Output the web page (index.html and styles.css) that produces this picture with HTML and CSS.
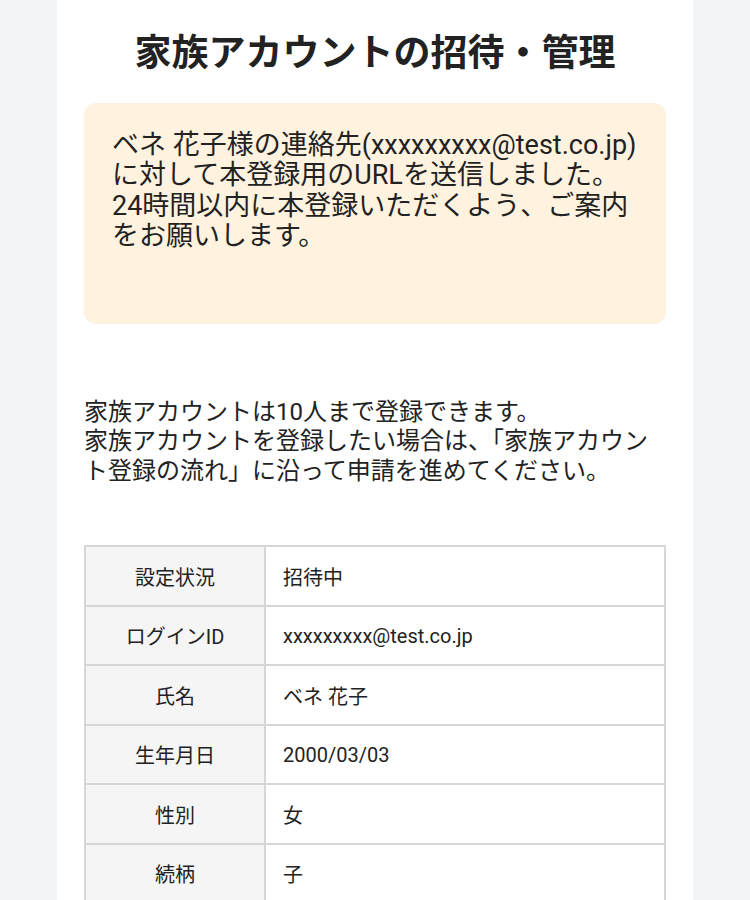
FILE: index.html
```html
<!DOCTYPE html>
<html lang="ja">
<head>
<meta charset="utf-8">
<link rel="stylesheet" href="styles.css">
</head>
<body>
<main class="page">
  <h1 class="title">家族アカウントの招待・管理</h1>
  <div class="notice">
    <p>ベネ 花子様の連絡先(xxxxxxxxx@test.co.jp)に対して本登録用のURLを送信しました。24時間以内に本登録いただくよう、ご案内をお願いします。</p>
  </div>
  <p class="lead">家族アカウントは10人まで登録できます。<br>家族アカウントを登録したい場合は、「家族アカウント登録の流れ」に沿って申請を進めてください。</p>
  <table class="info">
    <tr><th>設定状況</th><td>招待中</td></tr>
    <tr><th>ログインID</th><td>xxxxxxxxx@test.co.jp</td></tr>
    <tr><th>氏名</th><td>ベネ 花子</td></tr>
    <tr><th>生年月日</th><td>2000/03/03</td></tr>
    <tr><th>性別</th><td>女</td></tr>
    <tr><th>続柄</th><td>子</td></tr>
  </table>
</main>
</body>
</html>
```

FILE: styles.css
```css
html, body {
  margin: 0;
  padding: 0;
  background: #f3f4f6;
}
body {
  font-family: Roboto, "Noto Sans CJK JP", sans-serif;
  color: #222;
}
.page {
  width: 636px;
  box-sizing: border-box;
  margin: 0 auto;
  background: #fff;
  padding: 30px 27px 40px;
  min-height: 900px;
}
.title {
  margin: 0;
  font-size: 37px;
  line-height: 48px;
  font-weight: 700;
  text-align: center;
  color: #222;
}
.notice {
  margin-top: 25px;
  background: #fff3e0;
  border-radius: 12px;
  padding: 26.75px 28px 72px;
}
.notice p {
  margin: 0;
  font-size: 27px;
  line-height: 30.5px;
}
.lead {
  margin: 74px 0 0;
  font-size: 24px;
  line-height: 29.5px;
}
.info {
  margin-top: 59px;
  width: 100%;
  border-collapse: collapse;
  font-size: 20px;
}
.info th, .info td {
  border: 2px solid #d6d6d6;
  height: 57.5px;
  padding: 0 17px;
}
.info th {
  width: 144px;
  background: #f5f5f5;
  font-weight: 400;
  text-align: center;
}
.info td {
  text-align: left;
}
```
